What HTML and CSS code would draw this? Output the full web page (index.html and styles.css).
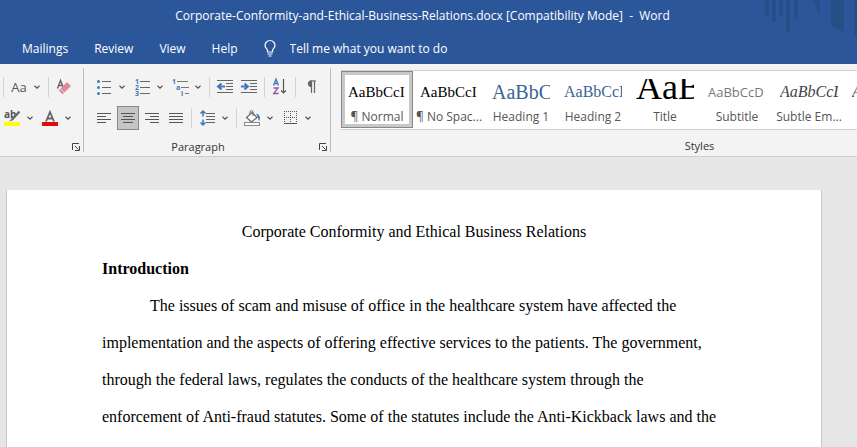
FILE: index.html
```html
<!DOCTYPE html>
<html lang="en">
    <head>
        <meta charset="UTF-8">
        <meta name="viewport" content="width=device-width, initial-scale=1.0">
        <title>Corporate-Conformity-and-Ethical-Business-Relations.docx - Word</title>
        <link rel="stylesheet" href="styles.css">
    </head>
    <body>
        <svg class="defs" aria-hidden="true">
            <symbol id="chevron" viewBox="0 0 6 4"><path d="M.5 .7L3 3.1L5.5 .7" fill="none" stroke="#555" stroke-width="1.2"/></symbol>
            <symbol id="launcher" viewBox="0 0 8 8"><path d="M.5 7V.5H7M3 3L6.5 6.5M7.5 3V7.5H3" fill="none" stroke="#444"/></symbol>
        </svg>

        <header class="top">
            <svg class="pattern" viewBox="0 0 100 40" aria-hidden="true">
                <path fill="#274f87" d="M8 0h4v16H8zM15 0h4v22h-4zM22 0h4v16h-4zM29 0h4v32h-4zM37 0h4v19h-4zM56 0h7v14zM74 0h13v32l-13-6zM97 0h3v36l-3-2z"/>
            </svg>
            <div class="title">Corporate-Conformity-and-Ethical-Business-Relations.docx [Compatibility Mode]&nbsp; -&nbsp; Word</div>
            <nav class="tabs">
                <a href="#">Mailings</a>
                <a href="#">Review</a>
                <a href="#">View</a>
                <a href="#">Help</a>
                <label class="tell">
                    <svg width="12" height="17" viewBox="0 0 12 17" fill="none" stroke="#fff" stroke-width="1.2"><path d="M3.5 12V10.500C3.500 9 1 8 1 5.500A5 5 0 0 1 11 5.500C11 8 8.500 9 8.500 10.500V12ZM3.500 14H8.500M4.500 16H7.500"/></svg>
                    <input type="text" placeholder="Tell me what you want to do" aria-label="Tell me what you want to do">
                </label>
            </nav>
        </header>

        <section class="ribbon">
            <div class="group font">
                <div class="row">
                    <i class="sep"></i>
                    <div class="split">
                        <button class="tool case">Aa</button>
                        <button class="more" aria-label="Change case options"><svg><use href="#chevron"/></svg></button>
                    </div>
                    <i class="sep"></i>
                    <button class="tool" aria-label="Clear formatting">
                        <svg width="16" height="16" viewBox="0 0 16 16"><path d="M1.500 9.500L4.500 1.500L7.500 9M2.600 6.500H6" fill="none" stroke="#666" stroke-width="1.500"/><path d="M11 3L15 7L8.500 13.500L4.500 9.500Z" fill="#e0899a"/><path d="M4 10L8 14L6.500 15L3 11.500Z" fill="#d9778b"/></svg>
                    </button>
                </div>
                <div class="row">
                    <div class="split">
                        <button class="tool" aria-label="Text highlight color">
                            <svg width="17" height="16" viewBox="0 0 17 16"><rect y="12" width="16" height="4" fill="#ff0"/><text x="0" y="8" class="ab">ab</text><path d="M15.500 1.500L8.500 9" stroke="#666" stroke-width="2.200"/><path d="M8.500 7.500L5 11.500L9.500 10Z" fill="#666"/></svg>
                        </button>
                        <button class="more" aria-label="Highlight colors"><svg><use href="#chevron"/></svg></button>
                    </div>
                    <div class="split">
                        <button class="tool" aria-label="Font color">
                            <svg width="16" height="16" viewBox="0 0 16 16"><rect y="12" width="16" height="4" fill="#e00b12"/><path d="M4 11.500L8 2L12 11.500M5.500 8.500H10.500" fill="none" stroke="#666" stroke-width="1.800"/></svg>
                        </button>
                        <button class="more" aria-label="Font colors"><svg><use href="#chevron"/></svg></button>
                    </div>
                </div>
                <div class="caption"><button class="launch" aria-label="Font settings"><svg><use href="#launcher"/></svg></button></div>
            </div>

            <div class="group paragraph">
                <div class="row">
                    <div class="split">
                        <button class="tool" aria-label="Bullets">
                            <svg width="14" height="16" viewBox="0 0 14 16"><path d="M5 2.500H14M5 8.500H14M5 14.500H14" stroke="#666"/><g fill="#3f78b5"><circle cx="1.500" cy="2.500" r="1.500"/><circle cx="1.500" cy="8.500" r="1.500"/><circle cx="1.500" cy="14.500" r="1.500"/></g></svg>
                        </button>
                        <button class="more" aria-label="Bullet library"><svg><use href="#chevron"/></svg></button>
                    </div>
                    <div class="split">
                        <button class="tool" aria-label="Numbering">
                            <svg width="15" height="16" viewBox="0 0 15 16"><path d="M5 2.500H15M5 8.500H15M5 14.500H15" stroke="#666"/><g class="num"><text x="0" y="5">1</text><text x="0" y="11">2</text><text x="0" y="17">3</text></g></svg>
                        </button>
                        <button class="more" aria-label="Numbering library"><svg><use href="#chevron"/></svg></button>
                    </div>
                    <div class="split">
                        <button class="tool" aria-label="Multilevel list">
                            <svg width="17" height="16" viewBox="0 0 17 16"><path d="M5 2.500H16M9 8.500H17M13 14.500H17" stroke="#777"/><g class="num"><text x="0" y="5">1</text><text x="4" y="11">a</text><text x="9" y="17">i</text></g></svg>
                        </button>
                        <button class="more" aria-label="List library"><svg><use href="#chevron"/></svg></button>
                    </div>
                    <i class="sep"></i>
                    <button class="tool" aria-label="Decrease indent">
                        <svg width="16" height="14" viewBox="0 0 16 14"><path d="M0 .5H16M9 3.500H16M9 6.500H16M9 9.500H16M0 12.500H16" stroke="#666"/><path d="M8 6.500H2M4.500 3.500L1 6.500L4.500 9.500" fill="none" stroke="#3f78b5" stroke-width="2"/></svg>
                    </button>
                    <button class="tool" aria-label="Increase indent">
                        <svg width="16" height="14" viewBox="0 0 16 14"><path d="M0 .5H16M9 3.500H16M9 6.500H16M9 9.500H16M0 12.500H16" stroke="#666"/><path d="M0 6.500H6M3.500 3.500L7 6.500L3.500 9.500" fill="none" stroke="#3f78b5" stroke-width="2"/></svg>
                    </button>
                    <i class="sep"></i>
                    <button class="tool" aria-label="Sort">
                        <svg width="14" height="17" viewBox="0 0 14 17" fill="none"><path d="M.5 7.500L3 1L5.500 7.500M1.500 5.500H4.500" stroke="#3f78b5" stroke-width="1.300"/><path d="M.5 10H5L.7 15.500H5.500" stroke="#8a55a8" stroke-width="1.300"/><path d="M10.500 1V15M8 12.500L10.500 15L13 12.500" stroke="#555" stroke-width="1.200"/></svg>
                    </button>
                    <i class="sep"></i>
                    <button class="tool" aria-label="Show paragraph marks">
                        <svg width="10" height="13" viewBox="0 0 10 13"><path d="M10 .5H4A3.500 3.500 0 0 0 4 7H5V1Z" fill="#666"/><path d="M4 1H10M5.500 1V13M8.500 1V13" stroke="#666" stroke-width="1.200"/></svg>
                    </button>
                </div>
                <div class="row">
                    <button class="tool" aria-label="Align left">
                        <svg width="14" height="10" viewBox="0 0 14 10"><path d="M0 .5H14M0 3.500H9M0 6.500H14M0 9.500H9" stroke="#555"/></svg>
                    </button>
                    <button class="tool pressed" aria-label="Center" aria-pressed="true">
                        <svg width="14" height="10" viewBox="0 0 14 10"><path d="M0 .5H14M2 3.500H12M0 6.500H14M2 9.500H12" stroke="#555"/></svg>
                    </button>
                    <button class="tool" aria-label="Align right">
                        <svg width="14" height="10" viewBox="0 0 14 10"><path d="M0 .5H14M5 3.500H14M0 6.500H14M5 9.500H14" stroke="#555"/></svg>
                    </button>
                    <button class="tool" aria-label="Justify">
                        <svg width="14" height="10" viewBox="0 0 14 10"><path d="M0 .5H14M0 3.500H14M0 6.500H14M0 9.500H14" stroke="#555"/></svg>
                    </button>
                    <i class="sep"></i>
                    <div class="split">
                        <button class="tool" aria-label="Line spacing">
                            <svg width="15" height="16" viewBox="0 0 15 16" fill="none"><path d="M6 3.500H15M6 6.500H15M6 9.500H15M6 12.500H15" stroke="#666"/><path d="M3 1V6.500M.5 3.500L3 1L5.500 3.500M3 9.500V15M.5 12.500L3 15L5.500 12.500" stroke="#3f78b5" stroke-width="1.500"/></svg>
                        </button>
                        <button class="more" aria-label="Spacing options"><svg><use href="#chevron"/></svg></button>
                    </div>
                    <i class="sep"></i>
                    <div class="split">
                        <button class="tool" aria-label="Shading">
                            <svg width="17" height="16" viewBox="0 0 17 16"><path d="M8 2.500L13 7.500L7.500 12L2.500 7.500Z" fill="#fff" stroke="#666" stroke-width="1.200"/><path d="M6 5V1.500Q7.500-.5 9 1.500V6" fill="none" stroke="#666"/><path d="M12 3.500Q17.500 5 15.500 11Q14.500 10.500 14 7.500Z" fill="#3f78b5"/><rect x=".5" y="12.500" width="15" height="3" fill="#fff" stroke="#888"/></svg>
                        </button>
                        <button class="more" aria-label="Shading colors"><svg><use href="#chevron"/></svg></button>
                    </div>
                    <div class="split">
                        <button class="tool" aria-label="Borders">
                            <svg width="13" height="13" viewBox="0 0 13 13" fill="none" stroke="#555"><path stroke-dasharray="1 1" d="M0 .5H13M0 6.500H13M.5 0V12M6.500 0V12M12.500 0V12"/><path d="M0 12.500H13"/></svg>
                        </button>
                        <button class="more" aria-label="Border options"><svg><use href="#chevron"/></svg></button>
                    </div>
                </div>
                <div class="caption">Paragraph<button class="launch" aria-label="Paragraph settings"><svg><use href="#launcher"/></svg></button></div>
            </div>

            <div class="group styles">
                <div class="gallery">
                    <button class="style selected"><span class="preview">AaBbCcI</span><span class="name">¶ Normal</span></button>
                    <button class="style"><span class="preview">AaBbCcI</span><span class="name">¶ No Spac...</span></button>
                    <button class="style"><span class="preview heading1">AaBbC</span><span class="name">Heading 1</span></button>
                    <button class="style"><span class="preview heading2">AaBbCcI</span><span class="name">Heading 2</span></button>
                    <button class="style"><span class="preview big">AaB</span><span class="name">Title</span></button>
                    <button class="style"><span class="preview subtitle">AaBbCcD</span><span class="name">Subtitle</span></button>
                    <button class="style"><span class="preview subtle">AaBbCcL</span><span class="name">Subtle Em...</span></button>
                    <button class="style" aria-label="Emphasis"><span class="preview subtle">A</span></button>
                </div>
                <div class="caption">Styles</div>
            </div>
        </section>

        <main class="workspace">
            <article class="page">
                <h1>Corporate Conformity and Ethical Business Relations</h1>
                <h2>Introduction</h2>
                <p>
                    The issues of scam and misuse of office in the healthcare system have affected the<br>
                    implementation and the aspects of offering effective services to the patients. The government,<br>
                    through the federal laws, regulates the conducts of the healthcare system through the<br>
                    enforcement of Anti-fraud statutes. Some of the statutes include the Anti-Kickback laws and the
                </p>
            </article>
        </main>
    </body>
</html>
```
FILE: styles.css
```css
* {
    box-sizing: border-box;
}

body {
    margin: 0;
    min-height: 100vh;
    display: flex;
    flex-direction: column;
    background: #e6e6e6;
    font-family: "Open Sans", "Noto Sans", sans-serif;
    font-size: 12px;
    color: #555;
}

button {
    display: flex;
    align-items: center;
    justify-content: center;
    flex: none;
    padding: 0;
    border: 0;
    background: none;
    font: inherit;
    color: inherit;
}

svg {
    flex: none;
    overflow: visible;
}

.defs {
    position: absolute;
    width: 0;
    height: 0;
}

/* title bar and tabs */
.top {
    position: relative;
    background: #2b579a;
    color: #fff;
}

.pattern {
    position: absolute;
    top: 0;
    right: 0;
    width: 100px;
    height: 40px;
}

.title {
    position: relative;
    height: 32px;
    padding-right: 12px;
    line-height: 32px;
    text-align: center;
    white-space: nowrap;
}

.tabs {
    display: flex;
    align-items: center;
    gap: 26px;
    height: 32px;
    padding-left: 22px;
}

.tabs a {
    color: #fff;
    text-decoration: none;
}

.tell {
    display: flex;
    align-items: center;
    gap: 14px;
}

.tell input {
    width: 200px;
    padding: 0;
    border: 0;
    background: none;
    font: inherit;
    color: #fff;
}

.tell input::placeholder {
    color: #fff;
    opacity: 1;
}

/* ribbon */
.ribbon {
    display: flex;
    height: 93px;
    padding-top: 4px;
    overflow: hidden;
    background: #f3f3f3;
    border-bottom: 1px solid #cfcfcf;
}

.group {
    flex: none;
    height: 84px;
    border-right: 1px solid #bdbdbd;
}

.font {
    width: 84px;
}

.paragraph {
    width: 247px;
}

.row {
    display: flex;
    align-items: center;
    height: 31px;
}

.row:first-child {
    margin-top: 3px;
}

.paragraph .row {
    padding-left: 8px;
}

.sep {
    flex: none;
    width: 1px;
    height: 20px;
    margin: 0 3px;
    background: #d4d4d4;
}

.tool {
    width: 24px;
    height: 24px;
}

.split {
    display: flex;
    flex: none;
    margin-right: 2px;
}

.case {
    font-size: 13px;
}

.more {
    width: 12px;
    height: 24px;
}

.more svg {
    width: 6px;
    height: 4px;
}

.pressed {
    width: 22px;
    margin: 0 1px;
    background: #c5c5c5;
    border: 1px solid #888;
}

.ab {
    font-size: 10px;
    font-weight: bold;
    fill: #555;
}

.num {
    font-size: 7px;
    font-weight: bold;
    fill: #3f78b5;
}

.caption {
    position: relative;
    height: 20px;
    margin-top: 4px;
    padding-right: 18px;
    font-size: 11px;
    line-height: 20px;
    text-align: center;
    color: #333;
}

.launch {
    position: absolute;
    right: 3px;
    top: 6px;
}

.launch svg {
    width: 8px;
    height: 8px;
}

/* style gallery */
.styles {
    width: 738px;
    padding: 2px 10px 0;
}

.gallery {
    display: flex;
    height: 60px;
    overflow: hidden;
    background: #fff;
    border: 1px solid #cfcfcf;
    border-left: 0;
}

.styles .caption {
    margin-top: 6px;
    padding-right: 0;
}

.style {
    flex-direction: column;
    justify-content: flex-start;
    width: 72px;
    height: 58px;
    padding: 8px 7px 0;
}

.selected {
    height: 57px;
    background: #fff;
    outline: 1px solid #888;
    outline-offset: -1px;
    box-shadow: inset 0 0 0 4px #c8c8c8;
}

.preview {
    flex: none;
    width: 100%;
    height: 30px;
    overflow: hidden;
    font-family: "Liberation Serif", serif;
    font-size: 15px;
    line-height: 26px;
    text-align: left;
    color: #000;
}

.name {
    line-height: 16px;
    white-space: nowrap;
}

.heading1 {
    font-size: 20px;
    color: #3b6394;
}

.heading2 {
    font-size: 16px;
    color: #3b6394;
}

.big {
    font-size: 36px;
    line-height: 16px;
}

.subtitle {
    font-family: "Open Sans", sans-serif;
    font-size: 13px;
    color: #777;
}

.subtle {
    font-size: 16px;
    font-style: italic;
    color: #444;
}

/* document */
.workspace {
    flex: 1;
    display: flex;
    padding: 33px 35px 0 6px;
}

.page {
    flex: 1;
    padding: 23px 95px 0;
    background: #fff;
    border: solid #c6c6c6;
    border-width: 0 1px;
    font-family: "Liberation Serif", serif;
    font-size: 16px;
    line-height: 37px;
    color: #000;
}

.page h1,
.page h2,
.page p {
    margin: 0;
    font-size: 16px;
    white-space: nowrap;
}

.page h1 {
    font-weight: normal;
    text-align: center;
}

.page p {
    text-indent: 48px;
}
```
